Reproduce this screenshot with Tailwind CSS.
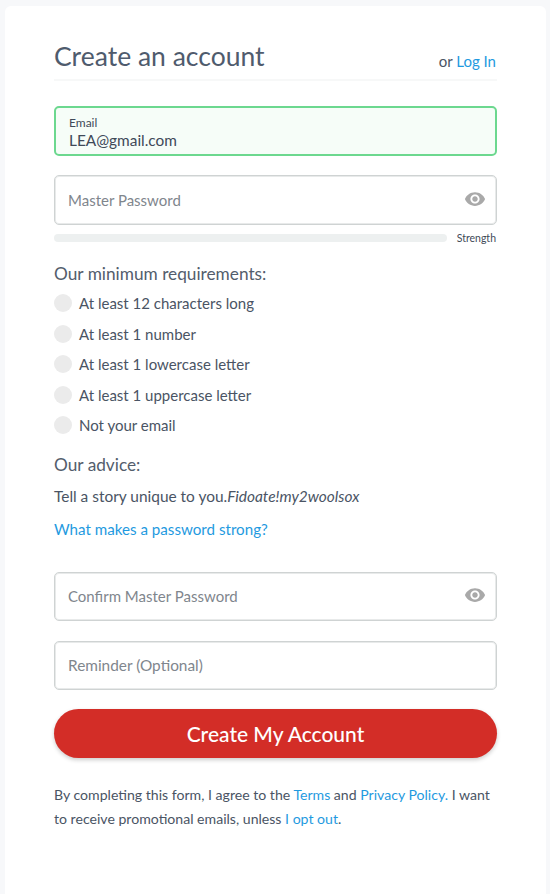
<!DOCTYPE html>
<html lang="en">
<head>
    <meta charset="UTF-8">
    <meta name="viewport" content="width=device-width, initial-scale=1.0">
    <title>Create an account</title>
    <script src="https://cdn.jsdelivr.net/npm/@tailwindcss/browser@4"></script>
</head>
<body class="bg-[#f7f8fa] h-[894px] overflow-hidden font-['Lato',sans-serif] text-[#4a5464]">
    <div class="ml-[5px] mr-[4px] mt-[6px] h-[888px] bg-white rounded-t-md px-[49px]">
        <div class="flex justify-between items-end h-[75px] pb-[6px] border-b-2 border-[#f7f8f8]">
            <h2 class="text-[26.5px] leading-[34px] text-[#4f5b6d]">Create an account</h2>
            <p class="text-[15px] leading-[20px] pb-[2px] pr-[1px]">or <a class="text-[#1f9ae0]">Log In</a></p>
        </div>

        <div class="mt-[25px] h-[50px] rounded-[5px] border-2 border-[#6cd88f] bg-[#f6fdf8] px-[13px] pt-[7px]">
            <div class="text-[12px] leading-[15px] text-[#3f4a58]">Email</div>
            <div class="text-[15.4px] leading-[20px] text-[#3f4a58]">LEA@gmail.com</div>
        </div>

        <div class="mt-[19px] h-[50px] rounded-[5px] border border-[#cfd3d3] shadow-[inset_0_0_0_1px_#e8eaea] flex items-center justify-between pl-[13px] pr-[10px]">
            <span class="text-[15px] text-[#7f868d]">Master Password</span>
            <svg class="w-[22px] h-[22px] -mt-[2px] fill-[#a9a9a9]" viewBox="0 0 24 24"><path d="M12 4.5C7 4.5 2.73 7.61 1 12c1.73 4.39 6 7.5 11 7.5s9.27-3.11 11-7.5c-1.73-4.39-6-7.5-11-7.5zM12 17c-2.76 0-5-2.24-5-5s2.24-5 5-5 5 2.24 5 5-2.24 5-5 5zm0-8c-1.66 0-3 1.34-3 3s1.34 3 3 3 3-1.34 3-3-1.34-3-3-3z"/></svg>
        </div>
        <div class="mt-[8px] flex items-center justify-between h-[10px]">
            <div class="w-[393px] h-[8px] rounded-full bg-[#edf0f0]"></div>
            <span class="text-[10.5px] leading-[10px] pr-[1px] text-[#3f4a58]">Strength</span>
        </div>

        <h3 class="mt-[19px] text-[17.25px] leading-[24px] text-[#535d6c]">Our minimum requirements:</h3>
        <ul class="mt-[2px] text-[15px] text-[#4a5464]">
            <li class="flex items-center gap-[7px] h-[30.5px]"><span class="w-[18px] h-[18px] rounded-full bg-[#ebebeb]"></span>At least 12 characters long</li>
            <li class="flex items-center gap-[7px] h-[30.5px]"><span class="w-[18px] h-[18px] rounded-full bg-[#ebebeb]"></span>At least 1 number</li>
            <li class="flex items-center gap-[7px] h-[30.5px]"><span class="w-[18px] h-[18px] rounded-full bg-[#ebebeb]"></span>At least 1 lowercase letter</li>
            <li class="flex items-center gap-[7px] h-[30.5px]"><span class="w-[18px] h-[18px] rounded-full bg-[#ebebeb]"></span>At least 1 uppercase letter</li>
            <li class="flex items-center gap-[7px] h-[30.5px]"><span class="w-[18px] h-[18px] rounded-full bg-[#ebebeb]"></span>Not your email</li>
        </ul>

        <h3 class="mt-[12px] text-[17.25px] leading-[24px] text-[#535d6c]">Our advice:</h3>
        <p class="mt-[8px] text-[15.45px] leading-[22px] text-[#4a5464]">Tell a story unique to you.<em>Fidoate!my2woolsox</em></p>
        <a class="block mt-[11px] text-[15.15px] leading-[22px] text-[#1f9ae0]">What makes a password strong?</a>

        <div class="mt-[32px] h-[49px] rounded-[5px] border border-[#cfd3d3] shadow-[inset_0_0_0_1px_#e8eaea] flex items-center justify-between pl-[13px] pr-[10px]">
            <span class="text-[15px] text-[#7f868d]">Confirm Master Password</span>
            <svg class="w-[22px] h-[22px] -mt-[2px] fill-[#a9a9a9]" viewBox="0 0 24 24"><path d="M12 4.5C7 4.5 2.73 7.61 1 12c1.73 4.39 6 7.5 11 7.5s9.27-3.11 11-7.5c-1.73-4.39-6-7.5-11-7.5zM12 17c-2.76 0-5-2.24-5-5s2.24-5 5-5 5 2.24 5 5-2.24 5-5 5zm0-8c-1.66 0-3 1.34-3 3s1.34 3 3 3 3-1.34 3-3-1.34-3-3-3z"/></svg>
        </div>
        <div class="mt-[20px] h-[49px] rounded-[5px] border border-[#cfd3d3] shadow-[inset_0_0_0_1px_#e8eaea] flex items-center pl-[13px] pt-[1px]">
            <span class="text-[15.4px] text-[#7f868d]">Reminder (Optional)</span>
        </div>

        <button class="mt-[19px] w-full h-[49px] pt-[1px] rounded-full bg-[#d32d27] text-white text-[21px] font-medium shadow-[0_2px_4px_rgba(0,0,0,0.2)]">Create My Account</button>

        <div class="mt-[25px] text-[14.1px] leading-[24px] text-[#4a5464]">
            <p>By completing this form, I agree to the <a class="text-[#1f9ae0]">Terms</a> and <a class="text-[#1f9ae0]">Privacy Policy.</a> I want</p>
            <p>to receive promotional emails, unless <a class="text-[#1f9ae0]">I opt out</a>.</p>
        </div>
    </div>
</body>
</html>
